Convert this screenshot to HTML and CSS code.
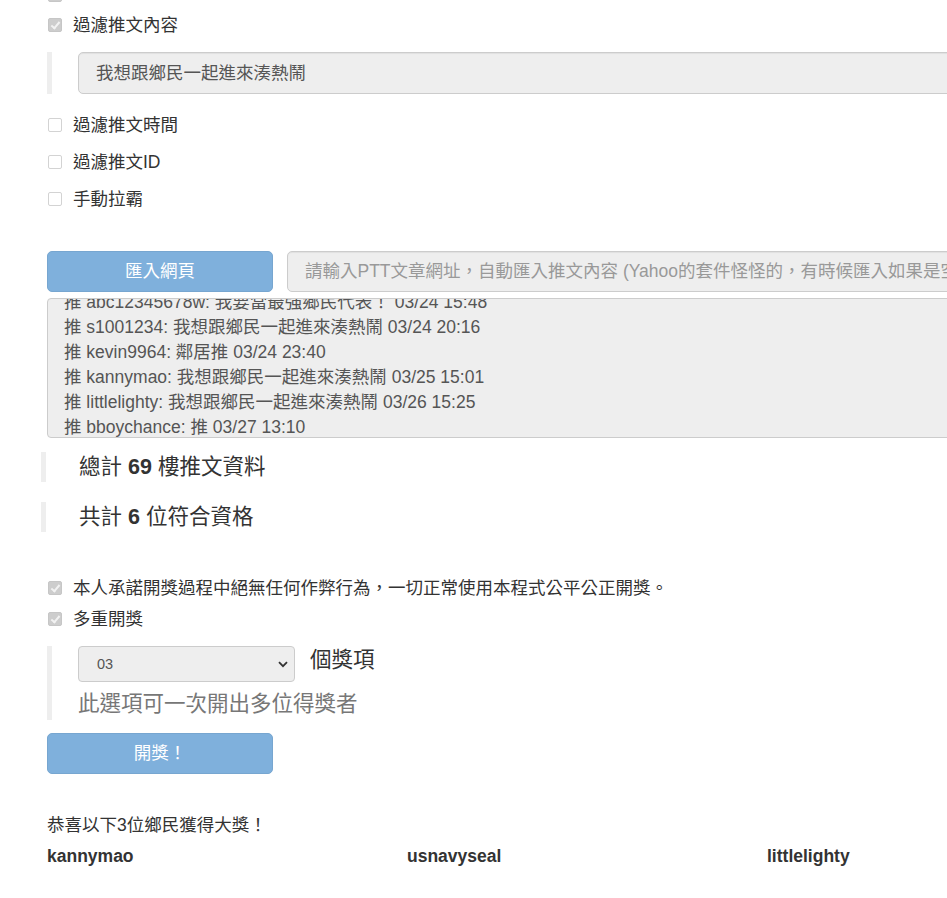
FILE: index.html
```html
<!DOCTYPE html>
<html lang="zh-Hant">
<head>
<meta charset="utf-8">
<title>PTT 抽獎</title>
<link rel="stylesheet" href="styles.css">
</head>
<body>
<div class="page">
  <div class="check-row row-cut"><span class="box checked"></span></div>
  <div class="check-row row-first"><span class="box checked"></span><span>過濾推文內容</span></div>
  <div class="bar-block bq-input">
    <div class="field">我想跟鄉民一起進來湊熱鬧</div>
  </div>
  <div class="check-row row-gap"><span class="box"></span><span>過濾推文時間</span></div>
  <div class="check-row"><span class="box"></span><span>過濾推文ID</span></div>
  <div class="check-row"><span class="box"></span><span>手動拉霸</span></div>

  <div class="import-row">
    <div class="btn">匯入網頁</div>
    <div class="field url placeholder">請輸入PTT文章網址，自動匯入推文內容 (Yahoo的套件怪怪的，有時候匯入如果是空白的請重新匯入)</div>
  </div>

  <div class="textarea">
    <div class="lines">
      <div>推 abc12345678w: 我要當最強鄉民代表！ 03/24 15:48</div>
      <div>推 s1001234: 我想跟鄉民一起進來湊熱鬧 03/24 20:16</div>
      <div>推 kevin9964: 鄰居推 03/24 23:40</div>
      <div>推 kannymao: 我想跟鄉民一起進來湊熱鬧 03/25 15:01</div>
      <div>推 littlelighty: 我想跟鄉民一起進來湊熱鬧 03/26 15:25</div>
      <div>推 bboychance: 推 03/27 13:10</div>
    </div>
  </div>

  <div class="stat stat-a">總計 <b>69</b> 樓推文資料</div>
  <div class="stat stat-b">共計 <b>6</b> 位符合資格</div>

  <div class="check-row row-promise"><span class="box checked"></span><span>本人承諾開獎過程中絕無任何作弊行為，一切正常使用本程式公平公正開獎。</span></div>
  <div class="check-row row-multi"><span class="box checked"></span><span>多重開獎</span></div>

  <div class="bar-block bq-select">
    <div class="select-line">
      <div class="select">
        <span>03</span>
        <svg class="chev" width="10" height="7" viewBox="0 0 10 7"><path d="M1 1.2 L5 5.2 L9 1.2" fill="none" stroke="#333" stroke-width="1.8"/></svg>
      </div>
      <span class="unit">個獎項</span>
    </div>
    <div class="help">此選項可一次開出多位得獎者</div>
  </div>

  <div class="btn draw">開獎！</div>

  <div class="congrats">恭喜以下3位鄉民獲得大獎！</div>
  <div class="winners">
    <div>kannymao</div>
    <div>usnavyseal</div>
    <div>littlelighty</div>
  </div>
</div>
</body>
</html>
```

FILE: styles.css
```css
html, body {
  margin: 0;
  padding: 0;
  overflow: hidden;
  background: #fff;
}
body {
  font-family: "Liberation Sans", "Noto Sans CJK TC", sans-serif;
  font-size: 17.5px;
  color: #333;
}
.page {
  width: 1150px;
  padding-left: 47px;
  display: flex;
  flex-direction: column;
  align-items: flex-start;
}
.check-row {
  height: 25px;
  line-height: 25px;
  display: flex;
  align-items: center;
  margin-top: 12px;
  white-space: nowrap;
}
.row-cut { margin-top: -20px; height: 20px; align-items: flex-end; }
.row-first { margin-top: 12.5px; }
.row-gap { margin-top: 18.5px; }
.row-promise { margin-top: 43.5px; }
.row-multi { margin-top: 6px; }
.row-cut .box { margin-bottom: -2px; }
.box {
  width: 12px;
  height: 12px;
  border: 1px solid #d3d3d3;
  border-radius: 2px;
  background: #fff;
  margin-left: 1px;
  margin-right: 11px;
  flex: none;
  position: relative;
}
.box.checked {
  background: #cdcdcd;
  border-color: #c6c6c6;
}
.box.checked::after {
  content: "";
  position: absolute;
  left: 4px;
  top: 1px;
  width: 3px;
  height: 7px;
  border: solid #f2f2f2;
  border-width: 0 2px 2px 0;
  transform: rotate(40deg);
}
.bar-block {
  border-left: 5px solid #eee;
  padding-left: 26px;
  width: 100%;
  box-sizing: border-box;
}
.bq-input { margin-top: 14.5px; }
.field {
  height: 42px;
  box-sizing: border-box;
  background: #eee;
  border: 1px solid #ccc;
  border-radius: 5px;
  line-height: 40px;
  padding: 0 17px;
  color: #555;
  white-space: nowrap;
  overflow: hidden;
  box-shadow: inset 0 1px 1px rgba(0,0,0,.06);
}
.import-row {
  margin-top: 39.5px;
  display: flex;
  gap: 14px;
  width: 100%;
}
.btn {
  width: 226px;
  height: 41px;
  box-sizing: border-box;
  flex: none;
  background: #7fb0dc;
  border: 1px solid #77a6d0;
  border-radius: 5px;
  color: #fff;
  text-align: center;
  line-height: 39px;
}
.url {
  flex: 1;
  height: 41px;
  line-height: 39px;
}
.placeholder { color: #999; }
.textarea {
  margin-top: 6px;
  width: 100%;
  height: 140px;
  box-sizing: border-box;
  background: #eee;
  border: 1px solid #ccc;
  border-radius: 4px;
  overflow: hidden;
  padding: 0 16px;
  color: #555;
}
.lines {
  margin-top: -9.5px;
  line-height: 25px;
  white-space: nowrap;
}
.stat {
  border-left: 5px solid #eee;
  margin-left: -6px;
  padding-left: 33px;
  height: 30px;
  line-height: 30px;
  font-size: 21.5px;
  color: #333;
  white-space: nowrap;
}
.stat b { font-weight: bold; }
.stat-a { margin-top: 14px; }
.stat-b { margin-top: 20px; }
.bq-select {
  margin-top: 14.5px;
  height: 74px;
}
.select-line {
  display: flex;
  align-items: flex-start;
  gap: 15px;
}
.select {
  width: 217px;
  height: 36px;
  box-sizing: border-box;
  background: #eee;
  border: 1px solid #ccc;
  border-radius: 4px;
  display: flex;
  align-items: center;
  justify-content: space-between;
  padding: 0 6px 0 18px;
  font-size: 14.5px;
  color: #555;
}
.chev { margin-top: 1px; }
.unit {
  font-size: 21.5px;
  line-height: 28px;
  color: #333;
}
.help {
  margin-top: 7px;
  font-size: 21.5px;
  line-height: 30px;
  color: #777;
  white-space: nowrap;
}
.draw { margin-top: 13px; }
.congrats {
  margin-top: 38.5px;
  line-height: 25px;
  color: #333;
}
.winners {
  margin-top: 6px;
  display: grid;
  grid-template-columns: 360px 360px 360px;
  line-height: 25px;
  font-weight: bold;
  color: #333;
}
```
